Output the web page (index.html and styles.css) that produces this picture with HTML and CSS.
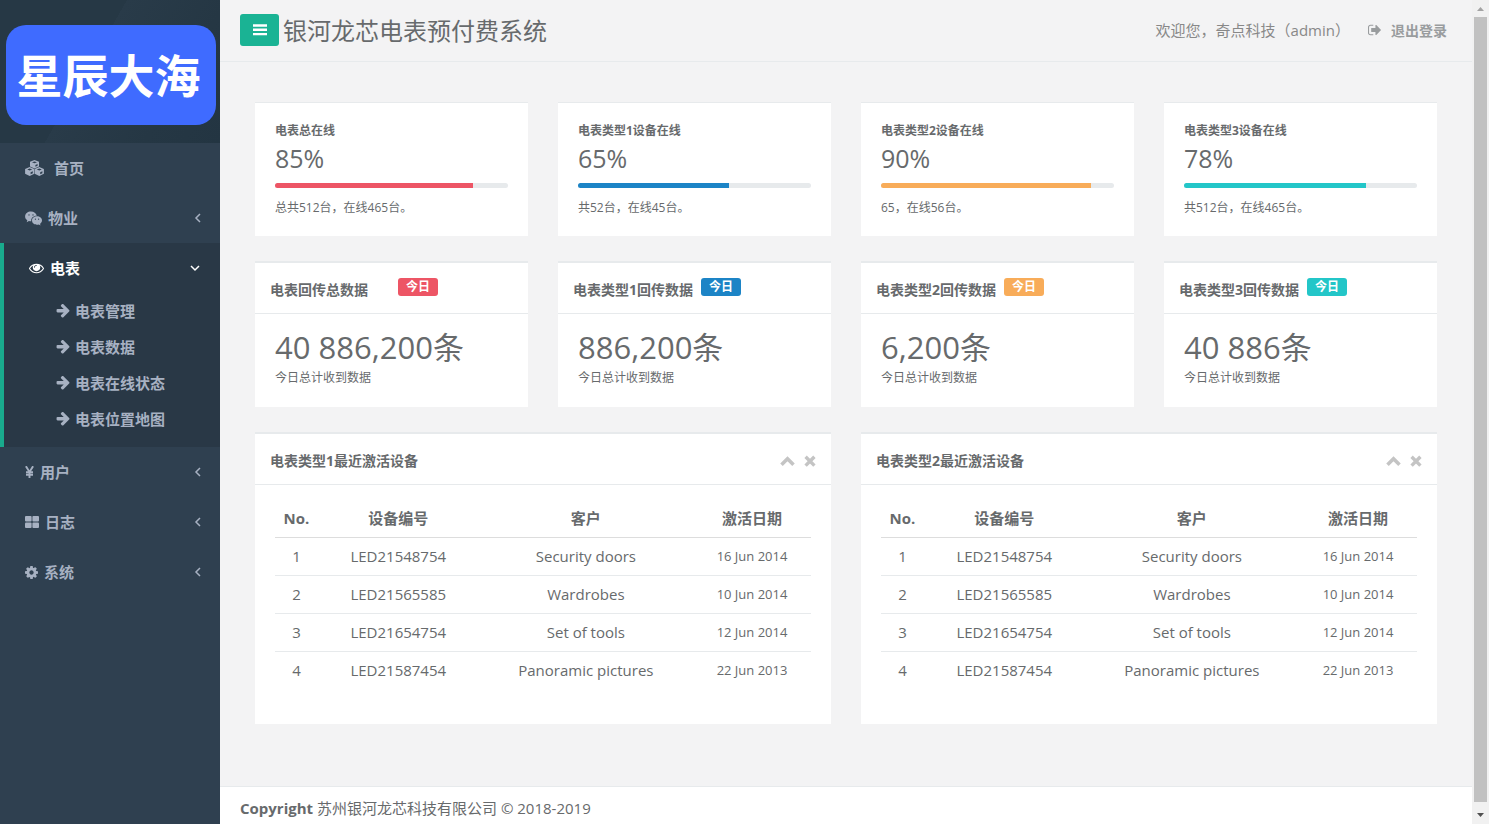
FILE: index.html
```
<!DOCTYPE html>
<html lang="zh-CN">
<head>
  <meta charset="UTF-8">
  <meta name="viewport" content="width=device-width, initial-scale=1.0">
  <title>银河龙芯电表预付费系统</title>
  <link rel="stylesheet" href="styles.css">
</head>
<body>
  <!-- shared icons -->
  <svg class="sprite" aria-hidden="true">
    <symbol id="arrow" viewBox="64 192 1600 1600"><path d="M1600 960q0 54-37 91l-651 651q-39 37-91 37-51 0-90-37l-75-75q-38-38-38-91t38-91l293-293h-704q-52 0-84.500-37.500t-32.500-90.500v-128q0-53 32.500-90.500t84.500-37.500h704l-293-294q-38-36-38-90t38-90l75-75q38-38 90-38 53 0 91 38l651 651q37 35 37 90z"/></symbol>
    <symbol id="angle" viewBox="0 0 10 10"><path d="M7 1 3 5l4 4" fill="none" stroke="currentColor" stroke-width="1.500"/></symbol>
    <symbol id="chevron" viewBox="0 0 15 12"><path d="M1.500 9.800 7.500 3.800l6 6" fill="none" stroke="currentColor" stroke-width="3.600"/></symbol>
    <symbol id="times" viewBox="0 0 12 12"><path d="M2.800 3l6.400 6.400M9.200 3 2.800 9.400" fill="none" stroke="currentColor" stroke-width="3.400" stroke-linecap="square"/></symbol>
  </svg>

  <nav class="sidebar">
    <div class="nav-header">
      <div class="logo">星辰大海</div>
    </div>
    <ul class="menu">
      <li>
        <a href="#" class="home">
          <svg width="19" height="16" viewBox="0 0 19 16"><g fill="currentColor"><path d="M9.500 0 14 1.800v4.800L9.500 8.400 5 6.600V1.800z"/><path d="M4.700 7 9.300 9v4.800L4.700 15.900.1 13.800V9z"/><path d="M14.300 7 18.900 9v4.800l-4.600 2.100-4.600-2.100V9z"/></g><path d="M7 2.300 9.500 3.200l2.500-.9-2.500-.9zM10.400 5v1.700l2.200-.9V4.100zM2.200 9.400l2.500 1 2.500-1-2.500-1zM5.600 12.300v1.900l2.200-1v-1.900zM11.800 9.400l2.500 1 2.500-1-2.500-1zM15.200 12.300v1.900l2.200-1v-1.900z" fill="#2f4050"/></svg>
          <span>首页</span>
        </a>
      </li>
      <li>
        <a href="#">
          <svg width="17" height="15" viewBox="0 0 17 15"><path d="M6 .5C2.700.5.100 2.600.100 5.400c0 1.600.9 2.900 2.200 3.800l-.6 2 2.200-1.200c.8.200 1.500.300 2.400.300-.6-3.200 2-5.600 5.500-5.600C11.200 2.200 8.900.5 6 .5z" fill="currentColor"/><path d="M12 5.300c-2.800 0-5 1.800-5 4.200s2.200 4.200 5 4.200c.6 0 1.200-.1 1.700-.3l1.800 1-.5-1.600c1.200-.8 2-2 2-3.300 0-2.400-2.200-4.200-5-4.200z" fill="currentColor"/><g fill="#2f4050"><circle cx="4" cy="3.900" r=".7"/><circle cx="8" cy="3.900" r=".7"/><circle cx="10.400" cy="8.200" r=".6"/><circle cx="13.600" cy="8.200" r=".6"/></g></svg>
          <span>物业</span>
          <svg class="caret" width="10" height="10"><use href="#angle"/></svg>
        </a>
      </li>
      <li class="active">
        <a href="#">
          <svg width="15" height="15" viewBox="0 64 1792 1792"><path fill="currentColor" d="M1664 960q-152-236-381-353 61 104 61 225 0 185-131.500 316.500t-316.500 131.500-316.500-131.500-131.500-316.500q0-121 61-225-229 117-381 353 133 205 333.500 326.500t434.500 121.500 434.500-121.500 333.500-326.500zm-720-384q0-20-14-34t-34-14q-125 0-214.500 89.500t-89.500 214.500q0 20 14 34t34 14 34-14 14-34q0-86 61-147t147-61q20 0 34-14t14-34zm848 384q0 34-20 69-140 230-376.500 368.500t-499.500 138.500-499.500-139-376.500-368q-20-35-20-69t20-69q140-229 376.500-368t499.500-139 499.500 139 376.500 368q20 35 20 69z"/></svg>
          <span>电表</span>
          <svg class="caret down" width="10" height="10"><use href="#angle"/></svg>
        </a>
        <ul class="submenu">
          <li><a href="#"><svg width="14" height="14"><use href="#arrow"/></svg><span>电表管理</span></a></li>
          <li><a href="#"><svg width="14" height="14"><use href="#arrow"/></svg><span>电表数据</span></a></li>
          <li><a href="#"><svg width="14" height="14"><use href="#arrow"/></svg><span>电表在线状态</span></a></li>
          <li><a href="#"><svg width="14" height="14"><use href="#arrow"/></svg><span>电表位置地图</span></a></li>
        </ul>
      </li>
      <li>
        <a href="#">
          <svg width="9" height="12" viewBox="0 0 9 12"><path d="M.9.200 4.500 6 8.100.200M4.500 5.500V12M1 6.200h7M1 8.700h7" fill="none" stroke="currentColor" stroke-width="1.900"/></svg>
          <span>用户</span>
          <svg class="caret" width="10" height="10"><use href="#angle"/></svg>
        </a>
      </li>
      <li>
        <a href="#">
          <svg width="14" height="12" viewBox="0 0 14 12"><g fill="currentColor"><rect width="6.600" height="5.600" rx="1"/><rect x="7.400" width="6.600" height="5.600" rx="1"/><rect y="6.400" width="6.600" height="5.600" rx="1"/><rect x="7.400" y="6.400" width="6.600" height="5.600" rx="1"/></g></svg>
          <span>日志</span>
          <svg class="caret" width="10" height="10"><use href="#angle"/></svg>
        </a>
      </li>
      <li>
        <a href="#">
          <svg width="13" height="13" viewBox="128 128 1536 1536"><path fill="currentColor" d="M1152 896q0-106-75-181t-181-75-181 75-75 181 75 181 181 75 181-75 75-181zm512-109v222q0 12-8 23t-20 13l-185 28q-19 54-39 91 35 50 107 138 10 12 10 25t-9 23q-27 37-99 108t-94 71q-12 0-26-9l-138-108q-44 23-91 38-16 136-29 186-7 28-36 28h-222q-14 0-24.500-8.500t-11.500-21.500l-28-184q-49-16-90-37l-141 107q-10 9-25 9-14 0-25-11-126-114-165-168-7-10-7-23 0-12 8-23 15-21 51-66.500t54-70.500q-27-50-41-99l-183-27q-13-2-21-12.500t-8-23.500v-222q0-12 8-23t19-13l186-28q14-46 39-92-40-57-107-138-10-12-10-24 0-10 9-23 26-36 98.500-107.500t94.500-71.500q13 0 26 10l138 107q44-23 91-38 16-136 29-186 7-28 36-28h222q14 0 24.500 8.500t11.500 21.500l28 184q49 16 90 37l142-107q9-9 24-9 13 0 25 10 129 119 165 170 7 8 7 22 0 12-8 23-15 21-51 66.500t-54 70.500q26 50 41 98l183 28q13 2 21 12.500t8 23.500z"/></svg>
          <span>系统</span>
          <svg class="caret" width="10" height="10"><use href="#angle"/></svg>
        </a>
      </li>
    </ul>
  </nav>

  <div class="page">
    <header class="topbar">
      <button class="toggle" type="button" aria-label="菜单">
        <svg width="14" height="12" viewBox="0 0 14 12"><path d="M0 1.500h14M0 5.800h14M0 10.100h14" stroke="currentColor" stroke-width="2.400"/></svg>
      </button>
      <h1>银河龙芯电表预付费系统</h1>
      <span class="welcome">欢迎您，奇点科技（admin）</span>
      <a href="#" class="logout">
        <svg width="13" height="12" viewBox="64 256 1568 1280"><path fill="currentColor" d="M704 1440q0 4 1 20t.5 26.500-3 23.500-10 19.500-20.500 6.500h-320q-119 0-203.500-84.500t-84.500-203.500v-704q0-119 84.500-203.500t203.500-84.500h320q13 0 22.500 9.500t9.500 22.500q0 4 1 20t.5 26.500-3 23.500-10 19.500-20.500 6.500h-320q-66 0-113 47t-47 113v704q0 66 47 113t113 47h312l11.500 1 11.500 3 8 5.500 7 9 2 13.500zm928-544q0 26-19 45l-544 544q-19 19-45 19t-45-19-19-45v-288h-448q-26 0-45-19t-19-45v-384q0-26 19-45t45-19h448v-288q0-26 19-45t45-19 45 19l544 544q19 19 19 45z"/></svg>
        <span>退出登录</span>
      </a>
    </header>

    <main class="content">
      <section class="card online">
        <h5>电表总在线</h5>
        <h2>85%</h2>
        <div class="progress"><div class="bar red" style="width: 85%"></div></div>
        <p>总共512台，在线465台。</p>
      </section>
      <section class="card online">
        <h5>电表类型1设备在线</h5>
        <h2>65%</h2>
        <div class="progress"><div class="bar blue" style="width: 65%"></div></div>
        <p>共52台，在线45台。</p>
      </section>
      <section class="card online">
        <h5>电表类型2设备在线</h5>
        <h2>90%</h2>
        <div class="progress"><div class="bar orange" style="width: 90%"></div></div>
        <p>65，在线56台。</p>
      </section>
      <section class="card online">
        <h5>电表类型3设备在线</h5>
        <h2>78%</h2>
        <div class="progress"><div class="bar teal" style="width: 78%"></div></div>
        <p>共512台，在线465台。</p>
      </section>

      <section class="card ibox">
        <div class="ibox-title"><h5>电表回传总数据</h5><span class="label red">今日</span></div>
        <div class="ibox-content"><h1>40 886,200条</h1><p>今日总计收到数据</p></div>
      </section>
      <section class="card ibox">
        <div class="ibox-title"><h5>电表类型1回传数据</h5><span class="label blue">今日</span></div>
        <div class="ibox-content"><h1>886,200条</h1><p>今日总计收到数据</p></div>
      </section>
      <section class="card ibox">
        <div class="ibox-title"><h5>电表类型2回传数据</h5><span class="label orange">今日</span></div>
        <div class="ibox-content"><h1>6,200条</h1><p>今日总计收到数据</p></div>
      </section>
      <section class="card ibox">
        <div class="ibox-title"><h5>电表类型3回传数据</h5><span class="label teal">今日</span></div>
        <div class="ibox-content"><h1>40 886条</h1><p>今日总计收到数据</p></div>
      </section>

      <section class="card ibox wide">
        <div class="ibox-title">
          <h5>电表类型1最近激活设备</h5>
          <div class="tools">
            <button type="button" aria-label="收起"><svg width="15" height="12"><use href="#chevron"/></svg></button>
            <button type="button" aria-label="关闭"><svg width="12" height="12"><use href="#times"/></svg></button>
          </div>
        </div>
        <div class="table-box">
          <table>
            <thead>
              <tr><th>No.</th><th>设备编号</th><th>客户</th><th>激活日期</th></tr>
            </thead>
            <tbody>
              <tr><td>1</td><td>LED21548754</td><td>Security doors</td><td>16 Jun 2014</td></tr>
              <tr><td>2</td><td>LED21565585</td><td>Wardrobes</td><td>10 Jun 2014</td></tr>
              <tr><td>3</td><td>LED21654754</td><td>Set of tools</td><td>12 Jun 2014</td></tr>
              <tr><td>4</td><td>LED21587454</td><td>Panoramic pictures</td><td>22 Jun 2013</td></tr>
            </tbody>
          </table>
        </div>
      </section>
      <section class="card ibox wide">
        <div class="ibox-title">
          <h5>电表类型2最近激活设备</h5>
          <div class="tools">
            <button type="button" aria-label="收起"><svg width="15" height="12"><use href="#chevron"/></svg></button>
            <button type="button" aria-label="关闭"><svg width="12" height="12"><use href="#times"/></svg></button>
          </div>
        </div>
        <div class="table-box">
          <table>
            <thead>
              <tr><th>No.</th><th>设备编号</th><th>客户</th><th>激活日期</th></tr>
            </thead>
            <tbody>
              <tr><td>1</td><td>LED21548754</td><td>Security doors</td><td>16 Jun 2014</td></tr>
              <tr><td>2</td><td>LED21565585</td><td>Wardrobes</td><td>10 Jun 2014</td></tr>
              <tr><td>3</td><td>LED21654754</td><td>Set of tools</td><td>12 Jun 2014</td></tr>
              <tr><td>4</td><td>LED21587454</td><td>Panoramic pictures</td><td>22 Jun 2013</td></tr>
            </tbody>
          </table>
        </div>
      </section>
    </main>

    <footer class="footer"><strong>Copyright</strong> 苏州银河龙芯科技有限公司 © 2018-2019</footer>
  </div>

  <div class="scrollbar" aria-hidden="true">
    <svg width="17" height="17" viewBox="0 0 17 17"><path d="M5 11h7L8.500 7z" fill="#a3a3a3"/></svg>
    <div class="thumb"></div>
    <svg width="17" height="17" viewBox="0 0 17 17"><path d="M5 6h7l-3.500 4z" fill="#505050"/></svg>
  </div>
</body>
</html>
```
FILE: styles.css
```
* {
  box-sizing: border-box;
}
body {
  display: flex;
  height: 100vh;
  margin: 0;
  overflow: hidden;
  background-color: #f3f3f4;
  color: #676a6c;
  font-family: "Open Sans", "Noto Sans CJK SC", sans-serif;
  font-size: 15px;
}
h1, h2, h5, p, ul {
  margin: 0;
  padding: 0;
}
ul {
  list-style: none;
}
a {
  color: inherit;
  text-decoration: none;
}
svg {
  display: block;
  flex: none;
}
button {
  padding: 0;
  border: none;
  background: none;
  color: inherit;
  cursor: pointer;
}
.sprite {
  position: absolute;
  width: 0;
  height: 0;
}

/* sidebar */
.sidebar {
  flex: none;
  width: 220px;
  background-color: #2f4050;
  color: #a7b1c2;
}
.nav-header {
  padding: 25px 4px 18px 6px;
  background: linear-gradient(120deg, #263845 0%, #263845 42%, #293b49 42%, #253744 75%, #233542 100%);
}
.logo {
  padding-right: 5px;
  border-radius: 20px;
  background-color: #3f6bff;
  color: #fff;
  font-size: 46px;
  font-weight: bold;
  line-height: 100px;
  text-align: center;
}
.menu a {
  display: flex;
  align-items: center;
  gap: 6px;
  height: 50px;
  padding: 0 17px 0 25px;
  font-weight: bold;
}
.menu span {
  padding-bottom: 2px;
}
.menu .home {
  gap: 10px;
}
.menu .caret {
  margin-left: auto;
}
.menu .down {
  transform: rotate(-90deg);
}
.menu .active {
  padding-bottom: 10px;
  border-left: 4px solid #19aa8d;
  background-color: #293846;
}
.menu .active > a {
  padding-right: 20px;
  color: #fff;
}
.menu .submenu a {
  gap: 5px;
  height: 36px;
  padding-left: 52px;
}
.submenu svg {
  fill: currentColor;
}

/* page */
.page {
  flex: 1;
  display: flex;
  flex-direction: column;
  min-width: 0;
}
.topbar {
  display: flex;
  flex: none;
  align-items: center;
  height: 62px;
  padding: 0 25px 2px 20px;
  border-bottom: 1px solid #e7eaec;
}
.toggle {
  display: flex;
  align-items: center;
  justify-content: center;
  width: 39px;
  height: 32px;
  margin-right: 4px;
  border-radius: 3px;
  background-color: #1ab394;
  color: #fff;
}
.topbar h1 {
  font-size: 24px;
  font-weight: normal;
}
.welcome {
  margin-left: auto;
  color: #888;
}
.logout {
  display: flex;
  align-items: center;
  gap: 10px;
  margin-left: 18px;
  color: #999c9e;
  font-size: 14px;
  font-weight: bold;
}
.content {
  display: grid;
  flex: 1;
  grid-template-columns: repeat(4, 1fr);
  align-content: start;
  gap: 25px 30px;
  padding: 40px 35px;
}
.card {
  border-top: 2px solid #e7eaec;
  background-color: #fff;
}
.card p {
  font-size: 12px;
  line-height: 20px;
}
.online {
  padding: 18px 20px;
  border-top-width: 1px;
}
.online h5 {
  font-size: 12px;
  line-height: 20px;
}
.online h2 {
  margin: 2px 0 10px;
  font-size: 25px;
  font-weight: normal;
  line-height: 30px;
}
.progress {
  height: 5px;
  margin-bottom: 10px;
  overflow: hidden;
  border-radius: 3px;
  background-color: #e7eaec;
}
.bar {
  height: 100%;
}
.red {
  background-color: #ed5565;
}
.blue {
  background-color: #1c84c6;
}
.orange {
  background-color: #f8ac59;
}
.teal {
  background-color: #23c6c8;
}
.ibox-title {
  display: flex;
  align-items: flex-start;
  gap: 7px;
  padding: 15px 15px 11px;
  border-bottom: 1px solid #e7eaec;
}
.ibox-title h5 {
  min-width: 121px;
  font-size: 14px;
  line-height: 24px;
}
.label {
  padding: 0 8px;
  border-radius: 3px;
  color: #fff;
  font-size: 12px;
  font-weight: bold;
  line-height: 18px;
}
.ibox-content {
  padding: 16px 20px 19px;
}
.ibox-content h1 {
  margin-bottom: 4px;
  font-size: 31px;
  font-weight: normal;
  line-height: 34px;
}
.wide {
  grid-column: span 2;
}
.tools {
  display: flex;
  gap: 9px;
  align-self: center;
  margin-left: auto;
  color: #c4c4c4;
}
.table-box {
  padding: 15px 20px 34px;
}
table {
  width: 100%;
  border-collapse: separate;
  border-spacing: 0;
  table-layout: fixed;
  text-align: center;
}
th, td {
  height: 38px;
  padding: 0 0 2px;
  border-bottom: 1px solid #e7eaec;
}
th {
  border-bottom-color: #ddd;
}
tbody tr:last-child td {
  border-bottom: none;
}
th:nth-child(1) {
  width: 8%;
}
th:nth-child(2) {
  width: 30%;
}
th:nth-child(3) {
  width: 40%;
}
td:last-child {
  font-size: 13px;
}
.footer {
  flex: none;
  height: 38px;
  padding: 0 20px;
  border-top: 1px solid #e7eaec;
  background-color: #fff;
  line-height: 43px;
}

/* scrollbar */
.scrollbar {
  display: flex;
  flex: none;
  flex-direction: column;
  width: 17px;
  background-color: #f1f1f1;
}
.thumb {
  flex: 1;
  margin: 0 2px 5px;
  background-color: #c1c1c1;
}
```
